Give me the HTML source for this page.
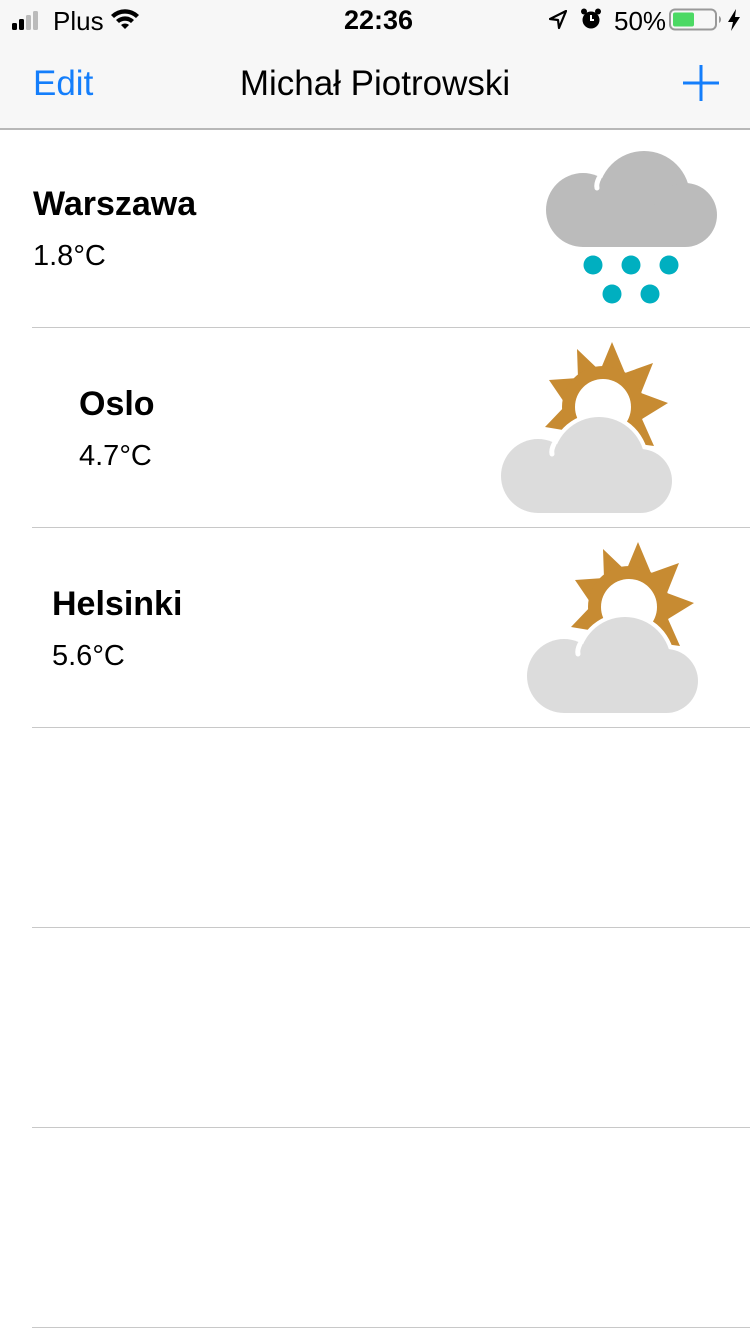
<!DOCTYPE html>
<html><head><meta charset="utf-8"><style>
body{margin:0;width:750px;height:1334px;background:#fff;font-family:"Liberation Sans",sans-serif;position:relative;overflow:hidden}
.nav{position:absolute;left:0;top:0;width:750px;height:128px;background:#f7f7f7;border-bottom:2px solid #b8b8b8}
.t{position:absolute;white-space:nowrap}
.sep{position:absolute;left:32px;right:0;height:1px;background:#c8c8c8}
.city{position:absolute;font-weight:bold;font-size:34px}
.temp{position:absolute;font-size:29px}
</style></head><body>
<div class="nav">
 <svg style="position:absolute;left:12px;top:11px" width="36" height="20"><rect x="0" y="12" width="5" height="7" rx="1.5"/><rect x="7" y="8" width="5" height="11" rx="1.5"/><rect x="14" y="4" width="5" height="15" rx="1.5" fill="#bbb"/><rect x="21" y="0" width="5" height="19" rx="1.5" fill="#bbb"/></svg>
 <div class="t" style="left:53px;top:6px;font-size:26px">Plus</div>
 <svg style="position:absolute;left:110px;top:8px" width="30" height="22" viewBox="0 0 30 22"><path d="M1 7 A20 20 0 0 1 29 7 L26 10 A16 16 0 0 0 4 10Z"/><path d="M6 12 A13 13 0 0 1 24 12 L21 15 A9 9 0 0 0 9 15Z"/><path d="M11 17 A6 6 0 0 1 19 17 L15 21Z"/></svg>
 <div class="t" style="left:344px;top:5px;font-size:27px;font-weight:bold">22:36</div>
 <svg style="position:absolute;left:549px;top:10px" width="18" height="20"><path d="M17 1 L1 9 L9 10 L10 18 Z" fill="none" stroke="#000" stroke-width="2.2" stroke-linejoin="round"/></svg>
 <svg style="position:absolute;left:580px;top:8px" width="22" height="22"><circle cx="11" cy="12" r="8.5"/><path d="M11 7 V12 H14" stroke="#fff" stroke-width="2" fill="none"/><circle cx="4" cy="3.5" r="3"/><circle cx="18" cy="3.5" r="3"/></svg>
 <div class="t" style="left:614px;top:6px;font-size:26px">50%</div>
 <svg style="position:absolute;left:669px;top:8px" width="56" height="24"><rect x="1" y="1.5" width="46" height="20" rx="5" fill="none" stroke="#999" stroke-width="2"/><rect x="4" y="4.5" width="21" height="14" rx="2" fill="#4cd964"/><path d="M50 8 A4 4 0 0 1 50 15Z" fill="#999"/></svg>
 <svg style="position:absolute;left:727px;top:9px" width="14" height="22"><path d="M9 0 L1 13 H6 L4 22 L13 8 H8 Z"/></svg>
 <div class="t" style="left:33px;top:64px;font-size:35px;color:#147efb">Edit</div>
 <div class="t" style="left:0;width:750px;text-align:center;top:64px;font-size:35px;font-weight:500">Michał Piotrowski</div>
 <svg style="position:absolute;left:683px;top:65px" width="36" height="36"><path d="M18 0V36M0 18H36" stroke="#147efb" stroke-width="3"/></svg>
</div>

<div class="city" style="left:33px;top:185px">Warszawa</div><div class="temp" style="left:33px;top:240px">1.8°C</div>
<div class="sep" style="top:327px"></div>
<div class="city" style="left:79px;top:385px">Oslo</div><div class="temp" style="left:79px;top:440px">4.7°C</div>
<div class="sep" style="top:527px"></div>
<div class="city" style="left:52px;top:585px">Helsinki</div><div class="temp" style="left:52px;top:640px">5.6°C</div>
<div class="sep" style="top:727px"></div>
<div class="sep" style="top:927px"></div>
<div class="sep" style="top:1127px"></div>
<div class="sep" style="top:1327px"></div>

<svg style="position:absolute;left:0;top:0" width="750" height="1334">
 <defs>
  <g id="cl">
   <circle cx="37" cy="59" r="37"/>
   <circle cx="98" cy="46" r="46"/>
   <circle cx="139" cy="64" r="32"/>
   <rect x="37" y="59" width="102" height="37"/>
   <path d="M53 27 Q50 33 51 37" stroke="#fff" stroke-width="5" stroke-linecap="round" fill="none"/>
  </g>
  <g id="clw">
   <circle cx="98" cy="46" r="50"/><circle cx="139" cy="64" r="36"/>
  </g>
  <g id="sun">
   <polygon fill="#c78b32" points="9,-65 22,-34 50,-44 38,-14 65,-4 39,12 51,39 21,35 13,60 -4,40 -30,53 -28,25 -58,20 -37,-2 -54,-27 -25,-29 -26,-58 -3,-36"/>
   <circle cx="0" cy="0" r="41" fill="#c78b32"/>
   <circle cx="0" cy="0" r="28" fill="#fff"/>
  </g>
 </defs>
 <g transform="translate(546,151)" fill="#bbbbbb"><use href="#cl"/></g>
 <g fill="#00afc0"><circle cx="593" cy="265" r="9.5"/><circle cx="631" cy="265" r="9.5"/><circle cx="669" cy="265" r="9.5"/><circle cx="612" cy="294" r="9.5"/><circle cx="650" cy="294" r="9.5"/></g>
 <g transform="translate(603,407)"><use href="#sun"/></g>
 <g transform="translate(501,417)"><g fill="#fff"><use href="#clw"/></g><g fill="#dcdcdc"><use href="#cl"/></g></g>
 <g transform="translate(629,607)"><use href="#sun"/></g>
 <g transform="translate(527,617)"><g fill="#fff"><use href="#clw"/></g><g fill="#dcdcdc"><use href="#cl"/></g></g>
</svg>
</body></html>
